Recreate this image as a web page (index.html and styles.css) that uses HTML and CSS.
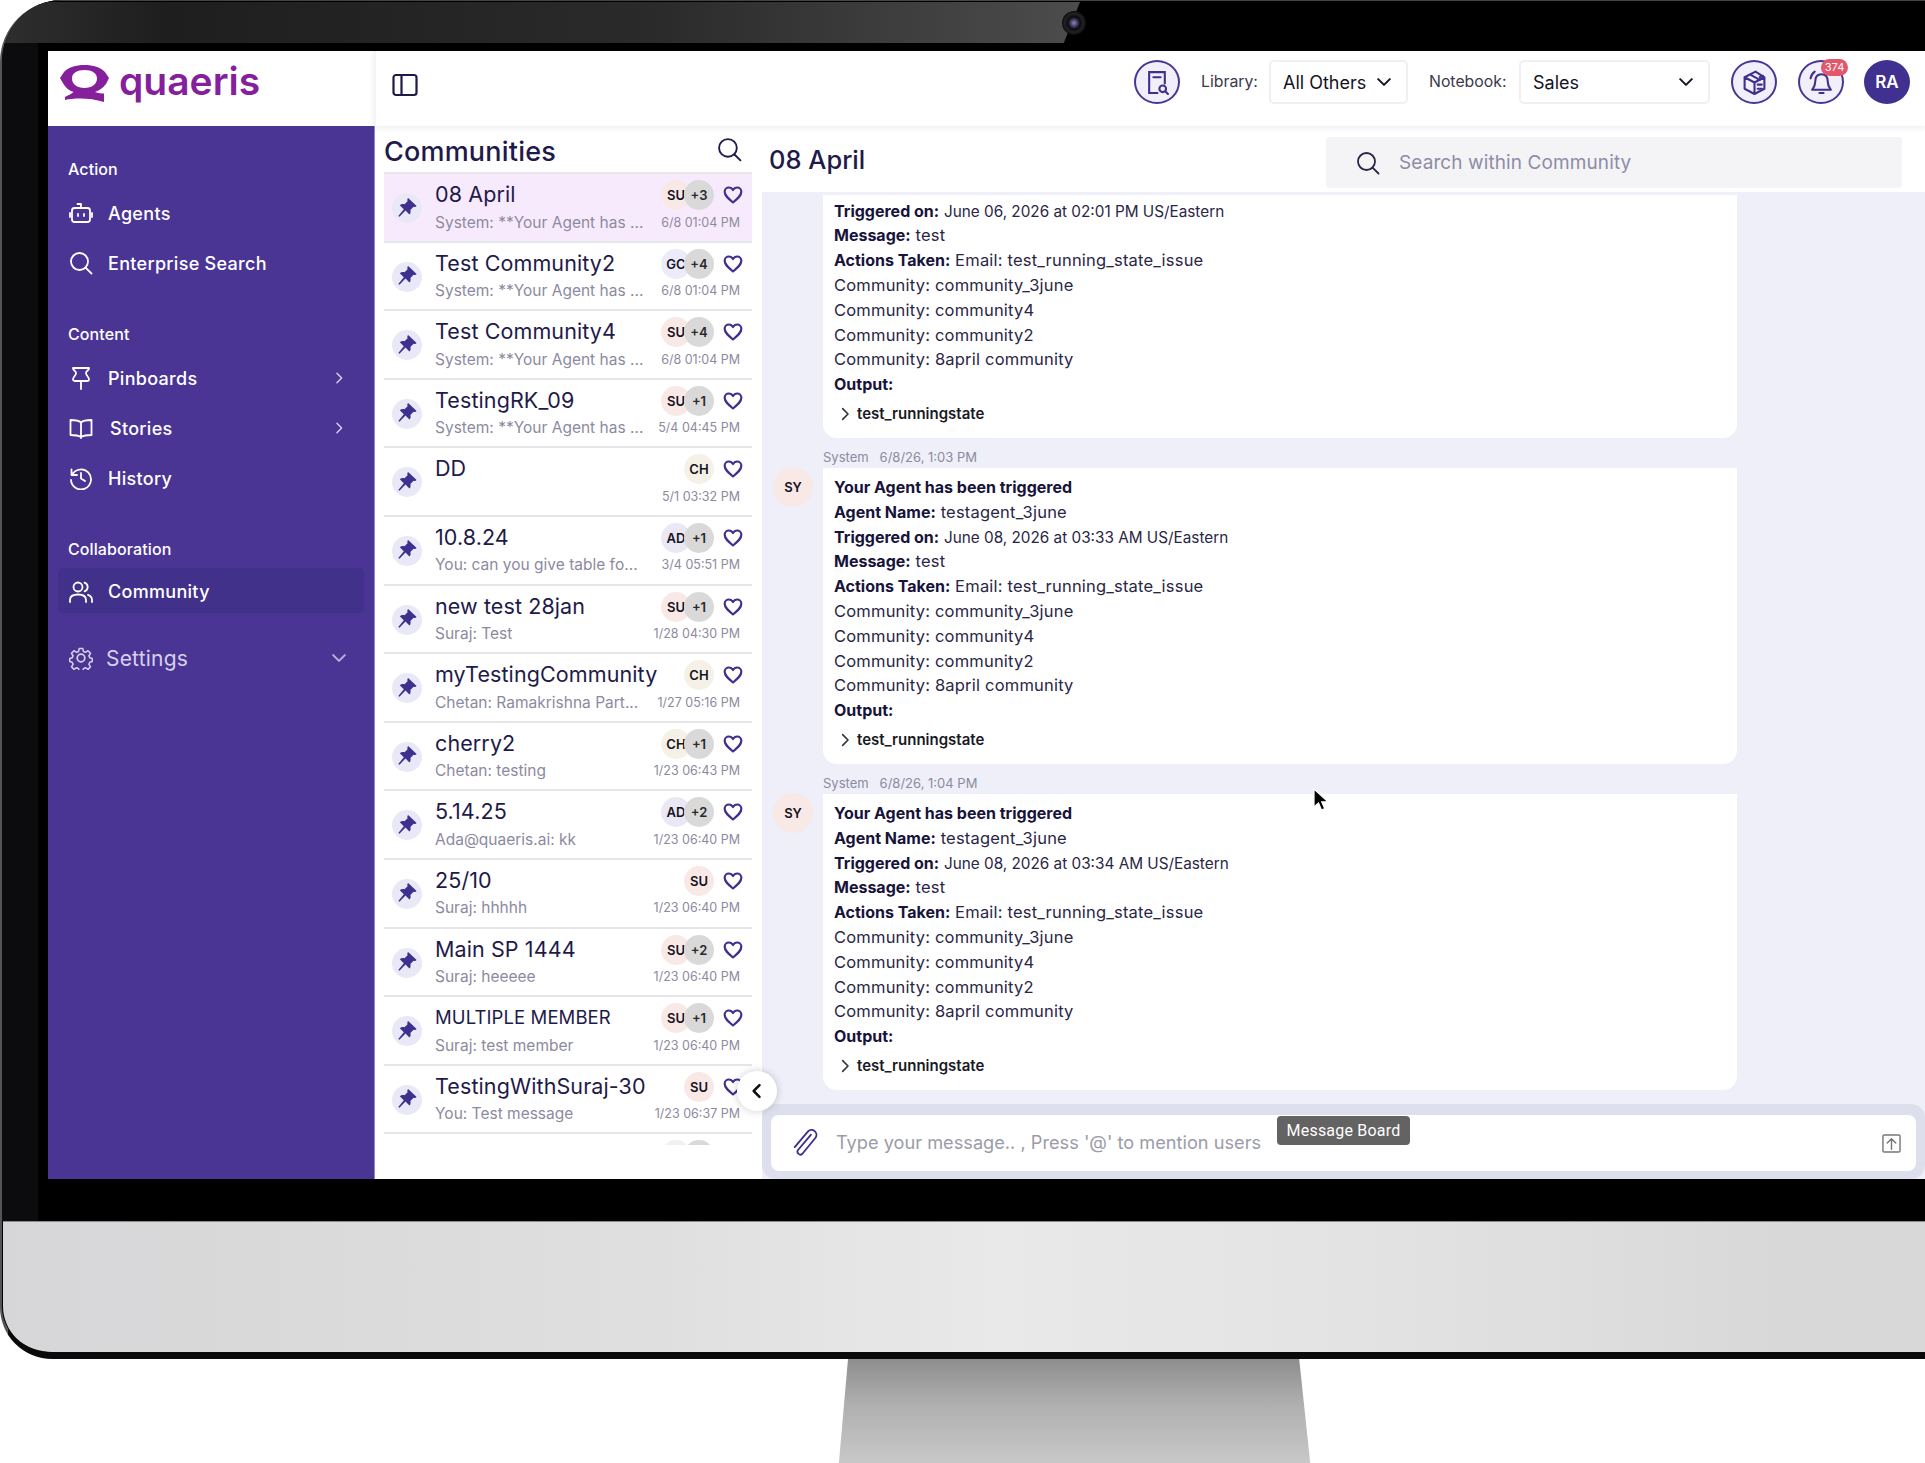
FILE: index.html
```html
<!DOCTYPE html>
<html lang="en">

<head>
    <meta charset="UTF-8">
    <meta name="viewport" content="width=device-width, initial-scale=1.0">
    <title>Quaeris - Communities</title>
    <link rel="stylesheet" href="styles.css">
</head>

<body>

<svg class="defs" width="0" height="0">
    <symbol id="pin" viewBox="0 0 24 24"><path fill="currentColor" d="M14.6 1.6l7.8 7.6c-.9 1-2.300 1.200-3.500.7l-3.600 3.700c.6 2 .2 3.900-1.100 5.300l-4.500-4.500-6.900 7-1.300-.9 6.300-7.700-4.600-4.600c1.500-1.300 3.500-1.600 5.400-1l3.500-3.500c-.5-1.200-.3-2.600.5-3.600z"/></symbol>
    <symbol id="heart" viewBox="0 0 24 24"><path fill="none" stroke="currentColor" stroke-width="2.600" stroke-linejoin="round" d="M12 21C6 16 2 12.600 2 8.200 2 5 4.400 3 7 3c2 0 3.800 1 5 3 1.200-2 3-3 5-3 2.600 0 5 2 5 5.200 0 4.400-4 7.800-10 12.800z"/></symbol>
    <symbol id="chev-down" viewBox="0 0 24 24"><path fill="none" stroke="currentColor" stroke-width="2.400" stroke-linecap="round" stroke-linejoin="round" d="M5 8.500l7 7 7-7"/></symbol>
    <symbol id="chev-right" viewBox="0 0 24 24"><path fill="none" stroke="currentColor" stroke-width="2.400" stroke-linecap="round" stroke-linejoin="round" d="M8.500 4l8 8-8 8"/></symbol>
    <symbol id="search" viewBox="0 0 24 24"><g fill="none" stroke="currentColor" stroke-width="1.800" stroke-linecap="round"><circle cx="10.500" cy="10.500" r="8.500"/><path d="M16.800 16.800l5.700 5.700"/></g></symbol>
</svg>

<div class="monitor">
    <div class="bezel">
        <div class="bezel-shine"></div>
        <div class="camera"></div>

        <div class="screen">
            <div class="side">
                <div class="brand">
                    <svg class="logo-mark" viewBox="0 0 49 38"><path fill="#851f9c" fill-rule="evenodd" d="M24.500 0C33 0 41 2.500 45 7L49 13 46 19C43 23 39 25.500 35 27 38 28 41 28.500 44 28.500L44 37C36 34.500 28 33.500 20 33.500 14 33.500 9 34 5 35L5 32C8 30.500 11 29 13.500 27 9 25.500 6 23 3.500 19L0 13 4 7C8 2.500 16 0 24.500 0ZM24.500 5C17 5 12 8 12 13.500 12 19 17 23 24.500 23 32 23 37 19 37 13.500 37 8 32 5 24.500 5Z"/></svg>
                    <span class="logo-text">quaeris</span>
                </div>
                <nav class="nav">
                    <div class="nav-group">
                        <div class="nav-label">Action</div>
                        <div class="nav-item">
                            <svg class="nav-icon" viewBox="0 0 24 24"><g fill="none" stroke="currentColor" stroke-width="1.800" stroke-linecap="round" stroke-linejoin="round"><rect x="3" y="7" width="18" height="14" rx="2.500"/><path d="M12 7V3H8.500M1 12v4M23 12v4M9 13v2M15 13v2"/></g></svg>
                            <span>Agents</span>
                        </div>
                        <div class="nav-item">
                            <svg class="nav-icon"><use href="#search"/></svg>
                            <span>Enterprise Search</span>
                        </div>
                    </div>
                    <div class="nav-group">
                        <div class="nav-label">Content</div>
                        <div class="nav-item">
                            <svg class="nav-icon" viewBox="0 0 24 24"><path fill="none" stroke="currentColor" stroke-width="1.800" stroke-linecap="round" stroke-linejoin="round" d="M4 2h16c0 3-3 2.500-3 5 0 3 3 3.500 3 6.500 0 1-1 1.500-2 1.500H6c-1 0-2-.5-2-1.500C4 10.500 7 10 7 7 7 4.500 4 5 4 2zM12 15v8"/></svg>
                            <span>Pinboards</span>
                            <svg class="nav-chev"><use href="#chev-right"/></svg>
                        </div>
                        <div class="nav-item">
                            <svg class="nav-icon" viewBox="0 0 24 24"><path fill="none" stroke="currentColor" stroke-width="1.800" stroke-linecap="round" stroke-linejoin="round" d="M12 6.500C10 4.500 6 4 1.500 4v15c4.500 0 8 .5 10.500 2 2.500-1.500 6-2 10.500-2V4C18 4 14 4.500 12 6.500zM12 6.500V22"/></svg>
                            <span class="nav-shift">Stories</span>
                            <svg class="nav-chev"><use href="#chev-right"/></svg>
                        </div>
                        <div class="nav-item">
                            <svg class="nav-icon" viewBox="0 0 24 24"><path fill="none" stroke="currentColor" stroke-width="1.800" stroke-linecap="round" stroke-linejoin="round" d="M2.500 3.500v5.500H8M3 9a10 10 0 1 1-1 5M12 7v5.500l4 2.500"/></svg>
                            <span>History</span>
                        </div>
                    </div>
                    <div class="nav-group nav-group-last">
                        <div class="nav-label">Collaboration</div>
                        <div class="nav-item nav-active">
                            <svg class="nav-icon" viewBox="0 0 24 24"><g fill="none" stroke="currentColor" stroke-width="1.800" stroke-linecap="round"><circle cx="9" cy="7" r="4.500"/><path d="M1 22v-2c0-3.500 3-5.500 8-5.500s8 2 8 5.500v2M15.500 2.700a4.500 4.500 0 0 1 0 8.600M19 14.800c2.500.8 4 2.500 4 5.200v2"/></g></svg>
                            <span>Community</span>
                        </div>
                    </div>
                    <div class="nav-item nav-settings">
                        <svg class="nav-icon" viewBox="0 0 24 24"><g fill="none" stroke="currentColor" stroke-width="1.700" stroke-linejoin="round"><path d="M10 1.500h4l.7 3.200 2.300 1 2.800-1.800 2.800 2.800-1.800 2.800 1 2.300 2.700.7v3.500l-2.700.7-1 2.300 1.800 2.800-2.800 2.800-2.800-1.800-2.300 1-.7 2.700h-4l-.7-2.700-2.300-1-2.800 1.800-2.800-2.800 1.800-2.800-1-2.300-2.700-.7v-3.500l2.700-.7 1-2.300-1.800-2.800 2.800-2.800 2.800 1.800 2.300-1z" transform="translate(1.200 1.200) scale(.9)"/><circle cx="12" cy="12" r="3.800"/></g></svg>
                        <span>Settings</span>
                        <svg class="nav-chev nav-chev-down"><use href="#chev-down"/></svg>
                    </div>
                </nav>
            </div>

            <div class="main">
                <header class="topbar">
                    <svg class="panel-toggle" viewBox="0 0 26 24"><g fill="none" stroke="#1e1a4a" stroke-width="2.200"><rect x="1.500" y="2" width="23" height="20" rx="2.500"/><path d="M9.500 2v20"/></g></svg>
                    <div class="round-btn">
                        <svg viewBox="0 0 24 24"><g fill="none" stroke="#3f2f8f" stroke-width="2" stroke-linecap="round"><path d="M12 22H4V2h15v11"/><path d="M8 7h7"/><circle cx="17" cy="18" r="3.200"/><path d="M19.500 20.500L22 23"/></g></svg>
                    </div>
                    <span class="top-label label-lib">Library:</span>
                    <div class="select select-lib"><span>All Others</span><svg><use href="#chev-down"/></svg></div>
                    <span class="top-label label-nb">Notebook:</span>
                    <div class="select select-nb"><span>Sales</span><svg><use href="#chev-down"/></svg></div>
                    <div class="round-btn">
                        <svg viewBox="0 0 24 24"><g fill="none" stroke="#3f2f8f" stroke-width="2" stroke-linejoin="round" stroke-linecap="round"><path d="M12 23L2.500 18V7L12 12zM12 23l9.500-5V7L12 12M2.500 7L13 1.500 21.500 7"/><path d="M8 4.500l9 5M15 14h4M15 18h4M17 7l3-1.500"/></g></svg>
                    </div>
                    <div class="round-btn bell-btn">
                        <svg viewBox="0 0 24 24"><g fill="none" stroke="#3f2f8f" stroke-width="2" stroke-linecap="round" stroke-linejoin="round"><path d="M12 4c-4 0-6 3-6 7 0 4-1 5-3 8h18c-2-3-3-4-3-8 0-4-2-7-6-7zM10 22h4"/><path d="M1.500 8C2 5 3.500 3 5.500 1.500"/></g></svg>
                        <span class="badge">374</span>
                    </div>
                    <div class="avatar-ra">RA</div>
                </header>

                <div class="content">
                    <section class="list-col">
                        <div class="list-head">
                            <h2>Communities</h2>
                            <svg><use href="#search"/></svg>
                        </div>
                        <div class="rows">
                            <div class="row row-active">
                                <div class="pin"><svg><use href="#pin"/></svg></div>
                                <div class="row-body">
                                    <div class="row-top"><span class="row-title">08 April</span><span class="av av-su">SU</span><span class="av av-more">+3</span><svg class="heart"><use href="#heart"/></svg></div>
                                    <div class="row-bot"><span class="row-sub">System: **Your Agent has ...</span><span class="row-date">6/8 01:04 PM</span></div>
                                </div>
                            </div>
                            <div class="row">
                                <div class="pin"><svg><use href="#pin"/></svg></div>
                                <div class="row-body">
                                    <div class="row-top"><span class="row-title">Test Community2</span><span class="av av-gc">GC</span><span class="av av-more">+4</span><svg class="heart"><use href="#heart"/></svg></div>
                                    <div class="row-bot"><span class="row-sub">System: **Your Agent has ...</span><span class="row-date">6/8 01:04 PM</span></div>
                                </div>
                            </div>
                            <div class="row">
                                <div class="pin"><svg><use href="#pin"/></svg></div>
                                <div class="row-body">
                                    <div class="row-top"><span class="row-title">Test Community4</span><span class="av av-su">SU</span><span class="av av-more">+4</span><svg class="heart"><use href="#heart"/></svg></div>
                                    <div class="row-bot"><span class="row-sub">System: **Your Agent has ...</span><span class="row-date">6/8 01:04 PM</span></div>
                                </div>
                            </div>
                            <div class="row">
                                <div class="pin"><svg><use href="#pin"/></svg></div>
                                <div class="row-body">
                                    <div class="row-top"><span class="row-title">TestingRK_09</span><span class="av av-su">SU</span><span class="av av-more">+1</span><svg class="heart"><use href="#heart"/></svg></div>
                                    <div class="row-bot"><span class="row-sub">System: **Your Agent has ...</span><span class="row-date">5/4 04:45 PM</span></div>
                                </div>
                            </div>
                            <div class="row">
                                <div class="pin"><svg><use href="#pin"/></svg></div>
                                <div class="row-body">
                                    <div class="row-top"><span class="row-title">DD</span><span class="av av-ch">CH</span><svg class="heart"><use href="#heart"/></svg></div>
                                    <div class="row-bot"><span class="row-sub"></span><span class="row-date">5/1 03:32 PM</span></div>
                                </div>
                            </div>
                            <div class="row">
                                <div class="pin"><svg><use href="#pin"/></svg></div>
                                <div class="row-body">
                                    <div class="row-top"><span class="row-title">10.8.24</span><span class="av av-ad">AD</span><span class="av av-more">+1</span><svg class="heart"><use href="#heart"/></svg></div>
                                    <div class="row-bot"><span class="row-sub">You: can you give table fo...</span><span class="row-date">3/4 05:51 PM</span></div>
                                </div>
                            </div>
                            <div class="row">
                                <div class="pin"><svg><use href="#pin"/></svg></div>
                                <div class="row-body">
                                    <div class="row-top"><span class="row-title">new test 28jan</span><span class="av av-su">SU</span><span class="av av-more">+1</span><svg class="heart"><use href="#heart"/></svg></div>
                                    <div class="row-bot"><span class="row-sub">Suraj: Test</span><span class="row-date">1/28 04:30 PM</span></div>
                                </div>
                            </div>
                            <div class="row">
                                <div class="pin"><svg><use href="#pin"/></svg></div>
                                <div class="row-body">
                                    <div class="row-top"><span class="row-title">myTestingCommunity</span><span class="av av-ch">CH</span><svg class="heart"><use href="#heart"/></svg></div>
                                    <div class="row-bot"><span class="row-sub">Chetan: Ramakrishna Part...</span><span class="row-date">1/27 05:16 PM</span></div>
                                </div>
                            </div>
                            <div class="row">
                                <div class="pin"><svg><use href="#pin"/></svg></div>
                                <div class="row-body">
                                    <div class="row-top"><span class="row-title">cherry2</span><span class="av av-ch">CH</span><span class="av av-more">+1</span><svg class="heart"><use href="#heart"/></svg></div>
                                    <div class="row-bot"><span class="row-sub">Chetan: testing</span><span class="row-date">1/23 06:43 PM</span></div>
                                </div>
                            </div>
                            <div class="row">
                                <div class="pin"><svg><use href="#pin"/></svg></div>
                                <div class="row-body">
                                    <div class="row-top"><span class="row-title">5.14.25</span><span class="av av-ad">AD</span><span class="av av-more">+2</span><svg class="heart"><use href="#heart"/></svg></div>
                                    <div class="row-bot"><span class="row-sub">Ada@quaeris.ai: kk</span><span class="row-date">1/23 06:40 PM</span></div>
                                </div>
                            </div>
                            <div class="row">
                                <div class="pin"><svg><use href="#pin"/></svg></div>
                                <div class="row-body">
                                    <div class="row-top"><span class="row-title">25/10</span><span class="av av-su">SU</span><svg class="heart"><use href="#heart"/></svg></div>
                                    <div class="row-bot"><span class="row-sub">Suraj: hhhhh</span><span class="row-date">1/23 06:40 PM</span></div>
                                </div>
                            </div>
                            <div class="row">
                                <div class="pin"><svg><use href="#pin"/></svg></div>
                                <div class="row-body">
                                    <div class="row-top"><span class="row-title">Main SP 1444</span><span class="av av-su">SU</span><span class="av av-more">+2</span><svg class="heart"><use href="#heart"/></svg></div>
                                    <div class="row-bot"><span class="row-sub">Suraj: heeeee</span><span class="row-date">1/23 06:40 PM</span></div>
                                </div>
                            </div>
                            <div class="row">
                                <div class="pin"><svg><use href="#pin"/></svg></div>
                                <div class="row-body">
                                    <div class="row-top"><span class="row-title row-title-caps">MULTIPLE MEMBER</span><span class="av av-su">SU</span><span class="av av-more">+1</span><svg class="heart"><use href="#heart"/></svg></div>
                                    <div class="row-bot"><span class="row-sub">Suraj: test member</span><span class="row-date">1/23 06:40 PM</span></div>
                                </div>
                            </div>
                            <div class="row">
                                <div class="pin"><svg><use href="#pin"/></svg></div>
                                <div class="row-body">
                                    <div class="row-top"><span class="row-title">TestingWithSuraj-30</span><span class="av av-su">SU</span><svg class="heart"><use href="#heart"/></svg></div>
                                    <div class="row-bot"><span class="row-sub">You: Test message</span><span class="row-date">1/23 06:37 PM</span></div>
                                </div>
                            </div>
                            <div class="row">
                                <div class="row-body row-peek">
                                    <div class="row-top"><span class="row-title"></span><span class="av av-blank"></span><span class="av av-more"></span></div>
                                </div>
                            </div>
                        </div>
                    </section>

                    <section class="chat-col">
                        <div class="chat-head">
                            <h2>08 April</h2>
                            <div class="chat-search">
                                <svg><use href="#search"/></svg>
                                <span>Search within Community</span>
                            </div>
                        </div>

                        <div class="feed">
                            <div class="msg msg-cut">
                                <div class="msg-body">
                                    <div class="card card-cut">
                                        <p><b>Triggered on:</b> <span class="when">June 06, 2026 at 02:01 PM US/Eastern</span></p>
                                        <p><b>Message:</b> test</p>
                                        <p><b>Actions Taken:</b> Email: test_running_state_issue</p>
                                        <p>Community: community_3june</p>
                                        <p>Community: community4</p>
                                        <p>Community: community2</p>
                                        <p>Community: 8april community</p>
                                        <p><b>Output:</b></p>
                                        <div class="detail"><svg><use href="#chev-right"/></svg>test_runningstate</div>
                                    </div>
                                </div>
                            </div>
                            <div class="msg">
                                <div class="av-sy">SY</div>
                                <div class="msg-body">
                                    <div class="meta"><span>System</span><span>6/8/26, 1:03 PM</span></div>
                                    <div class="card">
                                        <p><b>Your Agent has been triggered</b></p>
                                        <p><b>Agent Name:</b> testagent_3june</p>
                                        <p><b>Triggered on:</b> <span class="when">June 08, 2026 at 03:33 AM US/Eastern</span></p>
                                        <p><b>Message:</b> test</p>
                                        <p><b>Actions Taken:</b> Email: test_running_state_issue</p>
                                        <p>Community: community_3june</p>
                                        <p>Community: community4</p>
                                        <p>Community: community2</p>
                                        <p>Community: 8april community</p>
                                        <p><b>Output:</b></p>
                                        <div class="detail"><svg><use href="#chev-right"/></svg>test_runningstate</div>
                                    </div>
                                </div>
                            </div>
                            <div class="msg">
                                <div class="av-sy">SY</div>
                                <div class="msg-body">
                                    <div class="meta"><span>System</span><span>6/8/26, 1:04 PM</span></div>
                                    <div class="card">
                                        <p><b>Your Agent has been triggered</b></p>
                                        <p><b>Agent Name:</b> testagent_3june</p>
                                        <p><b>Triggered on:</b> <span class="when">June 08, 2026 at 03:34 AM US/Eastern</span></p>
                                        <p><b>Message:</b> test</p>
                                        <p><b>Actions Taken:</b> Email: test_running_state_issue</p>
                                        <p>Community: community_3june</p>
                                        <p>Community: community4</p>
                                        <p>Community: community2</p>
                                        <p>Community: 8april community</p>
                                        <p><b>Output:</b></p>
                                        <div class="detail"><svg><use href="#chev-right"/></svg>test_runningstate</div>
                                    </div>
                                </div>
                            </div>
                            <svg class="cursor" viewBox="0 0 16 24"><path fill="#000" stroke="#fff" stroke-width="1.200" d="M1 1v18l4.500-4 3 7 3.200-1.400-3-6.800H15z"/></svg>
                        </div>

                        <div class="composer">
                            <div class="composer-box">
                                <svg class="clip" viewBox="0 0 24 24"><path fill="none" stroke="#3f2f8f" stroke-width="1.600" stroke-linecap="round" stroke-linejoin="round" d="M17 5L6 18a2.500 2.500 0 0 0 3.800 3.200L21 7.500a4.200 4.200 0 0 0-6.400-5.400L3.200 15.500"/></svg>
                                <span class="placeholder">Type your message.. , Press '@' to mention users</span>
                                <svg class="send" viewBox="0 0 20 20"><g fill="none" stroke="#777" stroke-width="1.500" stroke-linecap="round" stroke-linejoin="round"><rect x="1" y="1" width="18" height="18" rx="1.500"/><path d="M10 16V5M5.500 9.500L10 5l4.500 4.500"/></g></svg>
                            </div>
                            <div class="tooltip">Message Board</div>
                        </div>
                    </section>

                    <button class="collapse-btn"><svg viewBox="0 0 24 24"><path fill="none" stroke="#111" stroke-width="3" stroke-linecap="round" stroke-linejoin="round" d="M15 5l-7 7 7 7"/></svg></button>
                </div>
            </div>
        </div>
    </div>
    <div class="chin"></div>
</div>
<div class="stand"></div>

</body>

</html>
```

FILE: styles.css
```css
* {
    box-sizing: border-box;
}

html, body {
    margin: 0;
    padding: 0;
    height: 1463px;
    overflow: hidden;
    background-color: white;
    font-family: Inter, "Liberation Sans", sans-serif;
    color: #1e1a4a;
}

.defs {
    position: absolute;
}

/* monitor frame */
.monitor {
    width: 2000px;
    height: 1359px;
    background-color: #000;
    border-radius: 62px 0 0 52px;
    overflow: hidden;
    border-left: 2px solid #555;
    border-bottom: 7px solid #0a0a0a;
}

.bezel {
    position: relative;
    height: 1221px;
    padding: 51px 0 0 46px;
    background: linear-gradient(to right, #0c0c0e 36px, #000 36px);
    box-shadow: inset 0 1px 0 #444;
}

.bezel-shine {
    position: absolute;
    top: 2px;
    left: 0;
    width: 1078px;
    height: 41px;
    clip-path: polygon(0 0, 100% 0, 98.500% 100%, 0 100%);
    background: linear-gradient(to right, #2e2e2e, #1e1e1e 15%, #2a2a2a 60%, #4c4c4c);
}

.camera {
    position: absolute;
    left: 1060px;
    top: 11px;
    width: 24px;
    height: 24px;
    border-radius: 50%;
    background: radial-gradient(circle, #8f86c8 0, #4b4670 18%, #0c0c10 36%, #222 55%, #0a0a0a 72%, #2a2a2a 100%);
}

.screen {
    display: flex;
    width: 1877px;
    height: 1128px;
    background-color: white;
}

.chin {
    height: 131px;
    background: linear-gradient(to right, #d6d6d8, #dedede 30%, #e9e9e9 50%, #e2e2e2 70%, #d8d8d8 90%);
    border-top: 1px solid #8a8a8a;
    border-radius: 0 0 0 46px;
    margin-left: 1px;
}

.stand {
    width: 480px;
    height: 104px;
    margin-left: 836px;
    clip-path: polygon(2.500% 0, 96.500% 0, 98.800% 100%, 0.600% 100%);
    background: linear-gradient(to bottom, #8e8e8e, #b0b0b0 45%, #c8c8c8);
}

/* sidebar */
.side {
    width: 326px;
    flex-shrink: 0;
    display: flex;
    flex-direction: column;
}

.brand {
    height: 75px;
    display: flex;
    gap: 10px;
    padding: 14px 0 0 12px;
}

.logo-mark {
    width: 49px;
    height: 38px;
}

.logo-text {
    font-size: 39px;
    font-weight: 600;
    line-height: 32px;
    color: #851f9c;
}

.nav {
    flex: 1;
    padding-top: 33px;
    background-color: #4a3595;
    color: white;
}

.nav-group {
    margin-bottom: 36px;
}

.nav-group-last {
    margin-bottom: 20px;
}

.nav-label {
    height: 20px;
    margin: 0 0 9px 20px;
    font-size: 16px;
    letter-spacing: 0.1px;
    line-height: 20px;
    font-weight: 500;
}

.nav-item {
    display: flex;
    align-items: center;
    gap: 15px;
    height: 50px;
    margin: 0 10px;
    padding: 0 18px 0 11px;
    font-size: 18px;
    letter-spacing: 0.3px;
    font-weight: 500;
}

.nav-icon {
    width: 24px;
    height: 24px;
    flex-shrink: 0;
}

.nav-shift {
    margin-left: 2px;
}

.nav-chev {
    width: 14px;
    height: 14px;
    margin-left: auto;
    color: #d8d4ee;
}

.nav-chev-down {
    width: 20px;
    height: 20px;
    margin-right: -3px;
    color: #b9b3dc;
}

.nav-active {
    height: 45px;
    margin-top: 3px;
    padding-top: 2px;
    border-radius: 5px;
    background-color: #41318a;
}

.nav-settings {
    gap: 13px;
    font-size: 21px;
    letter-spacing: 0.2px;
    font-weight: 400;
    color: #d6d2ec;
}

/* top bar */
.main {
    flex: 1;
    min-width: 0;
    display: flex;
    flex-direction: column;
}

.topbar {
    position: relative;
    z-index: 2;
    height: 75px;
    flex-shrink: 0;
    display: flex;
    align-items: flex-start;
    padding: 9px 15px 0 16px;
    background-color: white;
    box-shadow: 0 2px 6px rgba(30, 26, 74, 0.08);
    border-left: 2px solid #f5f5f7;
}

.panel-toggle {
    width: 26px;
    height: 24px;
    margin: 13px auto 0 0;
}

.round-btn {
    position: relative;
    width: 46px;
    height: 44px;
    display: flex;
    align-items: center;
    justify-content: center;
    border: 2px solid #4a3595;
    border-radius: 50%;
    background-color: #f1effa;
    margin-right: 21px;
}

.round-btn svg {
    width: 25px;
    height: 25px;
}

.badge {
    position: absolute;
    top: -3px;
    right: -6px;
    width: 27px;
    height: 17px;
    border-radius: 9px;
    background-color: #e4566a;
    color: white;
    font-size: 11px;
    line-height: 17px;
    text-align: center;
}

.bell-btn {
    margin-right: 20px;
}

.avatar-ra {
    width: 46px;
    height: 44px;
    border-radius: 50%;
    background-color: #40308f;
    color: white;
    font-size: 17px;
    font-weight: 600;
    line-height: 44px;
    text-align: center;
}

.top-label {
    font-size: 15.800px;
    line-height: 44px;
    color: #3a3a4a;
    white-space: nowrap;
}

.label-lib {
    width: 68px;
}

.label-nb {
    width: 90px;
}

.select {
    height: 44px;
    display: flex;
    align-items: center;
    justify-content: space-between;
    padding: 0 12px;
    border: 2px solid #f0f0f2;
    border-radius: 5px;
    font-size: 18px;
    color: #14141f;
    margin-right: 21px;
}

.select svg {
    width: 20px;
    height: 20px;
}

.select-lib {
    width: 139px;
}

.select-nb {
    width: 191px;
}

/* community list */
.content {
    position: relative;
    flex: 1;
    min-height: 0;
    display: flex;
}

.list-col {
    width: 388px;
    flex-shrink: 0;
    padding: 0 10px 0 9px;
    border-left: 1px solid #8f84c4;
}

.list-head {
    height: 48px;
    display: flex;
    align-items: center;
    justify-content: space-between;
    padding: 2px 10px 0 0;
}

.list-head h2 {
    margin: 0;
    font-size: 27px;
    letter-spacing: 0.2px;
    font-weight: 500;
}

.list-head svg {
    width: 25px;
    height: 25px;
    margin-bottom: 4px;
}

.rows {
    height: 973px;
    overflow: hidden;
    border-top: 2px solid #e6e6e9;
    margin-top: -2px;
}

.row {
    height: 68.600px;
    display: flex;
    align-items: flex-start;
    gap: 13px;
    padding: 0 9px 0 8px;
    border-bottom: 2px solid #e6e6e9;
}

.row-active {
    background-color: #f8eafd;
}

.pin {
    width: 30px;
    height: 30px;
    margin-top: 19px;
    flex-shrink: 0;
    display: flex;
    align-items: center;
    justify-content: center;
    border-radius: 50%;
    background-color: #e9e8f6;
    color: #3f2f8f;
}

.pin svg {
    width: 21px;
    height: 21px;
}

.row-body {
    flex: 1;
    min-width: 0;
    padding-top: 5px;
}

.row-peek {
    padding: 5px 29px 0 0;
}

.row-top {
    height: 30px;
    display: flex;
    align-items: center;
}

.row-title {
    flex: 1;
    font-size: 21.500px;
    letter-spacing: 0.1px;
    white-space: nowrap;
    color: #1e1a4a;
}

.row-title-caps {
    font-size: 18.500px;
}

.av {
    width: 30px;
    height: 30px;
    margin-top: 2px;
    flex-shrink: 0;
    border-radius: 50%;
    color: #15131f;
    font-size: 13px;
    font-weight: 600;
    line-height: 30px;
    text-align: center;
}

.av-su {
    background-color: #f8e9e7;
}

.av-gc {
    background-color: #ebebfa;
}

.av-ch {
    background-color: #f6f1e6;
}

.av-ad {
    background-color: #ebe8f6;
}

.av-blank {
    background-color: #f1f1f4;
}

.av-more {
    margin-left: -7px;
    background-color: #d9d9da;
    color: #2a2a2a;
}

.heart {
    width: 20px;
    height: 20px;
    margin: 2px 0 0 9px;
    color: #3f2f8f;
    flex-shrink: 0;
}

.row-bot {
    display: flex;
    justify-content: space-between;
    align-items: center;
    height: 20px;
    margin-top: 3px;
    padding-right: 3px;
    color: #8d8aa0;
}

.row-sub {
    font-size: 15.500px;
    white-space: nowrap;
}

.row-date {
    font-size: 12.500px;
    white-space: nowrap;
}

/* chat */
.chat-col {
    flex: 1;
    min-width: 0;
    display: flex;
    flex-direction: column;
    background-color: #eeeff8;
}

.chat-head {
    height: 66px;
    flex-shrink: 0;
    display: flex;
    justify-content: space-between;
    padding: 11px 23px 0 7px;
    background-color: white;
}

.chat-head h2 {
    margin: 0;
    font-size: 25.500px;
    font-weight: 500;
    line-height: 46px;
}

.chat-search {
    width: 576px;
    height: 51px;
    display: flex;
    align-items: center;
    gap: 19px;
    padding-left: 30px;
    border-radius: 4px;
    background-color: #f4f4f6;
    color: #8e8ca6;
    font-size: 19px;
    letter-spacing: 0.1px;
}

.chat-search svg {
    width: 24px;
    height: 24px;
    color: #2a2645;
}

.feed {
    position: relative;
    flex: 1;
    min-height: 0;
    display: flex;
    flex-direction: column;
    justify-content: flex-end;
    padding: 0 0 14px 11px;
    overflow: hidden;
}

.msg {
    flex-shrink: 0;
    display: flex;
    gap: 10px;
}

.msg-cut {
    padding-left: 50px;
}

.av-sy {
    width: 40px;
    height: 40px;
    margin-top: 29px;
    border-radius: 50%;
    background-color: #f8e9e7;
    color: #15131f;
    font-size: 13px;
    font-weight: 600;
    line-height: 40px;
    text-align: center;
}

.msg-body {
    width: 914px;
}

.meta {
    height: 30px;
    padding-top: 9px;
    display: flex;
    gap: 11px;
    font-size: 13px;
    line-height: 20px;
    color: #8d8aa0;
}

.card {
    padding: 7px 11px 12px;
    background-color: white;
    border-radius: 0 0 14px 14px;
    font-size: 16.500px;
    letter-spacing: 0.2px;
    color: #2a2645;
}

.card-cut {
    padding-top: 4px;
}

.card p {
    margin: 0;
    height: 24.800px;
    line-height: 24.800px;
    white-space: nowrap;
}

.card b {
    font-size: 16px;
    letter-spacing: 0;
    font-weight: 700;
    color: #17133a;
}

.when {
    font-size: 15.300px;
    letter-spacing: 0;
}

.detail {
    display: flex;
    align-items: center;
    gap: 4px;
    height: 25px;
    margin-top: 4px;
    padding-left: 3px;
    font-size: 15px;
    letter-spacing: 0;
    font-weight: 600;
    color: #1a1a24;
}

.detail svg {
    width: 16px;
    height: 16px;
    color: #333;
}

.cursor {
    position: absolute;
    left: 551px;
    top: 596px;
    width: 16px;
    height: 24px;
}

/* message box */
.composer {
    position: relative;
    height: 75px;
    flex-shrink: 0;
    padding: 11px 9px 8px;
    background-color: #dde0ec;
    border-radius: 14px;
}

.composer-box {
    height: 56px;
    display: flex;
    align-items: center;
    padding: 0 15px 0 20px;
    background-color: white;
    border-radius: 8px;
}

.clip {
    width: 28px;
    height: 28px;
    margin-right: 17px;
}

.placeholder {
    margin-bottom: 2px;
    font-size: 18.200px;
    color: #9c9ca8;
}

.send {
    width: 19px;
    height: 19px;
    margin-left: auto;
}

.tooltip {
    position: absolute;
    left: 515px;
    top: 12px;
    width: 133px;
    height: 29px;
    border-radius: 4px;
    background-color: #636363;
    color: white;
    font-family: Roboto, sans-serif;
    font-size: 16px;
    letter-spacing: 0.2px;
    line-height: 29px;
    text-align: center;
}

.collapse-btn {
    position: absolute;
    left: 363px;
    top: 945px;
    width: 40px;
    height: 40px;
    padding: 10px;
    border: none;
    border-radius: 50%;
    background-color: white;
    box-shadow: 0 0 8px rgba(0, 0, 0, 0.2);
}
```
